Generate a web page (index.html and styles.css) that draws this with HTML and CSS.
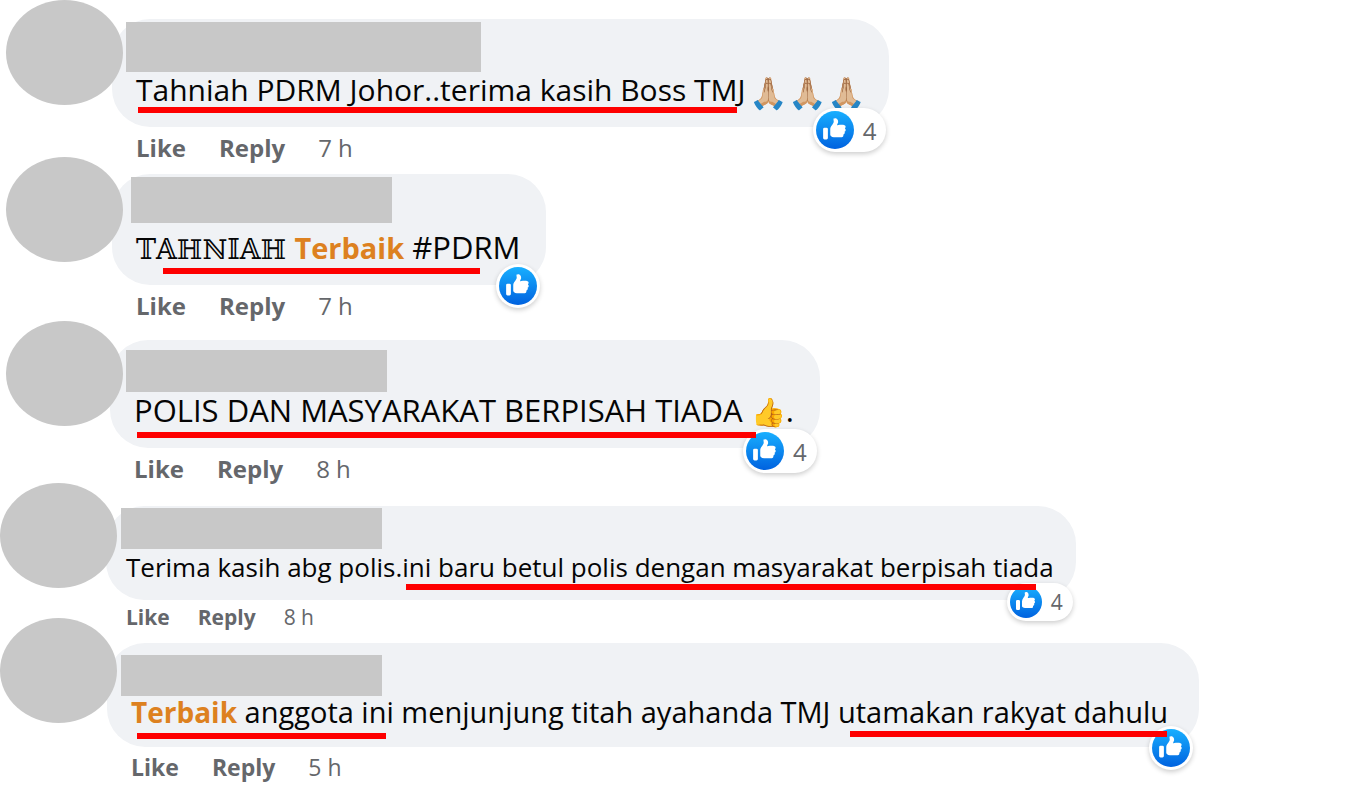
FILE: index.html
```
<!DOCTYPE html>
<html lang="ms">
<head>
<meta charset="utf-8" />
<title>Comments</title>
<link rel="stylesheet" href="styles.css">
</head>

<body>

<svg class="defs" aria-hidden="true">
  <defs>
    <linearGradient id="blue" x1="0" y1="0" x2="0" y2="1">
      <stop offset="0" stop-color="#18afff" />
      <stop offset="1" stop-color="#0062df" />
    </linearGradient>
  </defs>
  <symbol id="thumb" viewBox="0 0 16 16">
    <circle cx="8" cy="8" r="8" fill="url(#blue)" />
    <path fill="#fff" d="M12.162 7.338c.176.123.338.245.338.674 0 .43-.229.604-.474.725.1.163.132.36.089.546-.077.344-.392.611-.672.69.121.194.159.385.015.62-.185.295-.346.407-1.058.407H7.5c-.988 0-1.5-.546-1.5-1V7.665c0-1.23 1.467-2.275 1.467-3.13L7.361 3.47c-.005-.065.008-.224.058-.27.08-.079.301-.2.635-.2.218 0 .363.041.534.123.581.277.732.978.732 1.542 0 .271-.414 1.083-.47 1.364 0 0 .867-.192 1.879-.199 1.061-.006 1.749.19 1.749.842 0 .261-.219.523-.316.666zM3.6 7h.8a.6.6 0 01.6.6v3.8a.6.6 0 01-.6.6h-.8a.6.6 0 01-.6-.6V7.6a.6.6 0 01.6-.6z" />
  </symbol>
</svg>

<main class="comments">

<article class="comment c1">
  <div class="avatar"></div>
  <div class="content">
    <div class="bubble">
      <div class="name"></div>
      <p class="text">Tahniah PDRM Johor..terima kasih Boss TMJ <span class="emoji">🙏🏼🙏🏼🙏🏼</span></p>
      <button class="reactions" type="button" aria-label="4 likes"><svg><use href="#thumb" /></svg><span>4</span></button>
      <i class="mark"></i>
    </div>
    <div class="actions">
      <button type="button">Like</button>
      <button type="button">Reply</button>
      <a href="#">7 h</a>
    </div>
  </div>
</article>

<article class="comment c2">
  <div class="avatar"></div>
  <div class="content">
    <div class="bubble">
      <div class="name"></div>
      <p class="text"><span class="outline">𝕋𝔸ℍℕ𝕀𝔸ℍ</span> <b>Terbaik</b> #PDRM</p>
      <button class="reactions" type="button" aria-label="1 like"><svg><use href="#thumb" /></svg></button>
      <i class="mark"></i>
    </div>
    <div class="actions">
      <button type="button">Like</button>
      <button type="button">Reply</button>
      <a href="#">7 h</a>
    </div>
  </div>
</article>

<article class="comment c3">
  <div class="avatar"></div>
  <div class="content">
    <div class="bubble">
      <div class="name"></div>
      <p class="text">POLIS DAN MASYARAKAT BERPISAH TIADA <span class="emoji">👍</span>.</p>
      <button class="reactions" type="button" aria-label="4 likes"><svg><use href="#thumb" /></svg><span>4</span></button>
      <i class="mark"></i>
    </div>
    <div class="actions">
      <button type="button">Like</button>
      <button type="button">Reply</button>
      <a href="#">8 h</a>
    </div>
  </div>
</article>

<article class="comment c4">
  <div class="avatar"></div>
  <div class="content">
    <div class="bubble">
      <div class="name"></div>
      <p class="text">Terima kasih abg polis.ini baru betul polis dengan masyarakat berpisah tiada</p>
      <button class="reactions" type="button" aria-label="4 likes"><svg><use href="#thumb" /></svg><span>4</span></button>
      <i class="mark"></i>
    </div>
    <div class="actions">
      <button type="button">Like</button>
      <button type="button">Reply</button>
      <a href="#">8 h</a>
    </div>
  </div>
</article>

<article class="comment c5">
  <div class="avatar"></div>
  <div class="content">
    <div class="bubble">
      <div class="name"></div>
      <p class="text"><b>Terbaik</b> anggota ini menjunjung titah ayahanda TMJ utamakan rakyat dahulu</p>
      <button class="reactions" type="button" aria-label="1 like"><svg><use href="#thumb" /></svg></button>
      <i class="mark"></i>
      <i class="mark second"></i>
    </div>
    <div class="actions">
      <button type="button">Like</button>
      <button type="button">Reply</button>
      <a href="#">5 h</a>
    </div>
  </div>
</article>

</main>

</body>
</html>
```
FILE: styles.css
```
* {
  box-sizing: border-box;
}

body {
  margin: 0;
  background: #fff;
  color: #050505;
  font-family: "Open Sans", "Noto Sans", sans-serif;
}

.defs {
  display: block;
  width: 0;
  height: 0;
}

.comments {
  padding: 19px 0 6px 6px;
}

.comment {
  display: flex;
  align-items: flex-start;
}

.avatar {
  flex: none;
  z-index: 1;
  width: 117px;
  height: 105px;
  margin-top: -19px;
  border-radius: 50%;
  background: #c8c8c8;
}

.content {
  margin-left: -11px;
}

.bubble {
  position: relative;
  width: fit-content;
  padding: 3px 26px 19px 24px;
  border-radius: 38px;
  background: #f0f2f5;
}

.name {
  width: 261px;
  height: 42px;
  margin-left: -10px;
  background: #c8c8c8;
}

.text {
  margin: 0;
  font-size: 31px;
  line-height: 36px;
}

.text b {
  color: #dd8120;
  font-size: 28px;
}

.outline {
  font-family: "DejaVu Serif", serif;
  font-size: 27px;
  line-height: 1;
}

.emoji {
  font-size: 28px;
  line-height: 1;
}

/* red underline, drawn over the bubble */
.mark {
  position: absolute;
  height: 6px;
  background: #fe0000;
}

.reactions {
  position: absolute;
  right: 3px;
  bottom: -25px;
  display: flex;
  align-items: center;
  gap: 9px;
  height: 44px;
  padding: 3px 10px 3px 3px;
  border: 0;
  border-radius: 22px;
  background: #fff;
  box-shadow: 0 2px 5px rgba(0, 0, 0, .2);
  color: #65676b;
  font: 24px "Open Sans", sans-serif;
}

.reactions svg {
  width: 38px;
  height: 38px;
}

.actions {
  display: flex;
  gap: 33px;
  margin-top: 7px;
  padding-left: 24px;
  font-size: 24px;
  line-height: 27px;
}

.actions button,
.actions a {
  padding: 0;
  border: 0;
  background: none;
  color: #65676b;
  font: inherit;
  text-decoration: none;
  cursor: pointer;
}

.actions button {
  font-weight: bold;
}

/* first comment */
.c1 .bubble {
  padding-right: 23px;
}

.c1 .name {
  width: 355px;
  height: 50px;
}

.c1 .text {
  height: 36px;
  font-size: 30px;
}

.c1 .emoji {
  margin-left: -4px;
  font-size: 31px;
  vertical-align: -3px;
}

.c1 .mark {
  left: 26px;
  top: 88px;
  width: 599px;
}

/* second comment */
.c2 {
  margin-top: 13px;
}

.c2 .avatar {
  margin-top: -17px;
}

.c2 .name {
  height: 46px;
  margin: 0 0 6px -5px;
}

.c2 .text b {
  font-size: 29px;
}

.c2 .mark {
  left: 51px;
  top: 94px;
  width: 317px;
}

.c2 .reactions,
.c5 .reactions {
  right: 6px;
  bottom: -23px;
  padding: 3px;
}

/* third comment */
.c3 {
  margin-top: 21px;
}

.c3 .content {
  margin-left: -13px;
}

.c3 .bubble {
  padding: 10px 26px 20px 24px;
}

.c3 .name {
  margin-left: -8px;
}

.c3 .mark {
  left: 27px;
  top: 92px;
  width: 619px;
}

/* last two sit against the left edge */
.c4,
.c5 {
  margin-left: -6px;
}

.c4 .avatar {
  margin-top: -23px;
}

.c5 .avatar {
  margin-top: -25px;
}

.c4 .name,
.c5 .name {
  height: 41px;
}

.c4 {
  margin-top: 24px;
}

.c4 .bubble {
  padding: 2px 22px 15px 20px;
}

.c4 .name {
  margin-left: -5px;
}

.c4 .text {
  font-size: 26px;
}

.c4 .mark {
  left: 300px;
  top: 78px;
  width: 630px;
}

.c4 .reactions {
  bottom: -21px;
  height: 38px;
  font-size: 21px;
}

.c4 .reactions svg {
  width: 32px;
  height: 32px;
}

.c4 .actions {
  gap: 28px;
  margin-top: 4px;
  padding-left: 20px;
  font-size: 21px;
}

.c5 {
  margin-top: 12px;
}

.c5 .content {
  margin-left: -10px;
}

.c5 .bubble {
  padding-top: 12px;
  padding-right: 31px;
}

.c5 .text {
  font-size: 29px;
  line-height: 32px;
}

.c5 .mark {
  left: 30px;
  top: 90px;
  width: 249px;
}

.c5 .second {
  left: 743px;
  top: 88px;
  width: 317px;
}

.c5 .actions {
  font-size: 23px;
}
```
